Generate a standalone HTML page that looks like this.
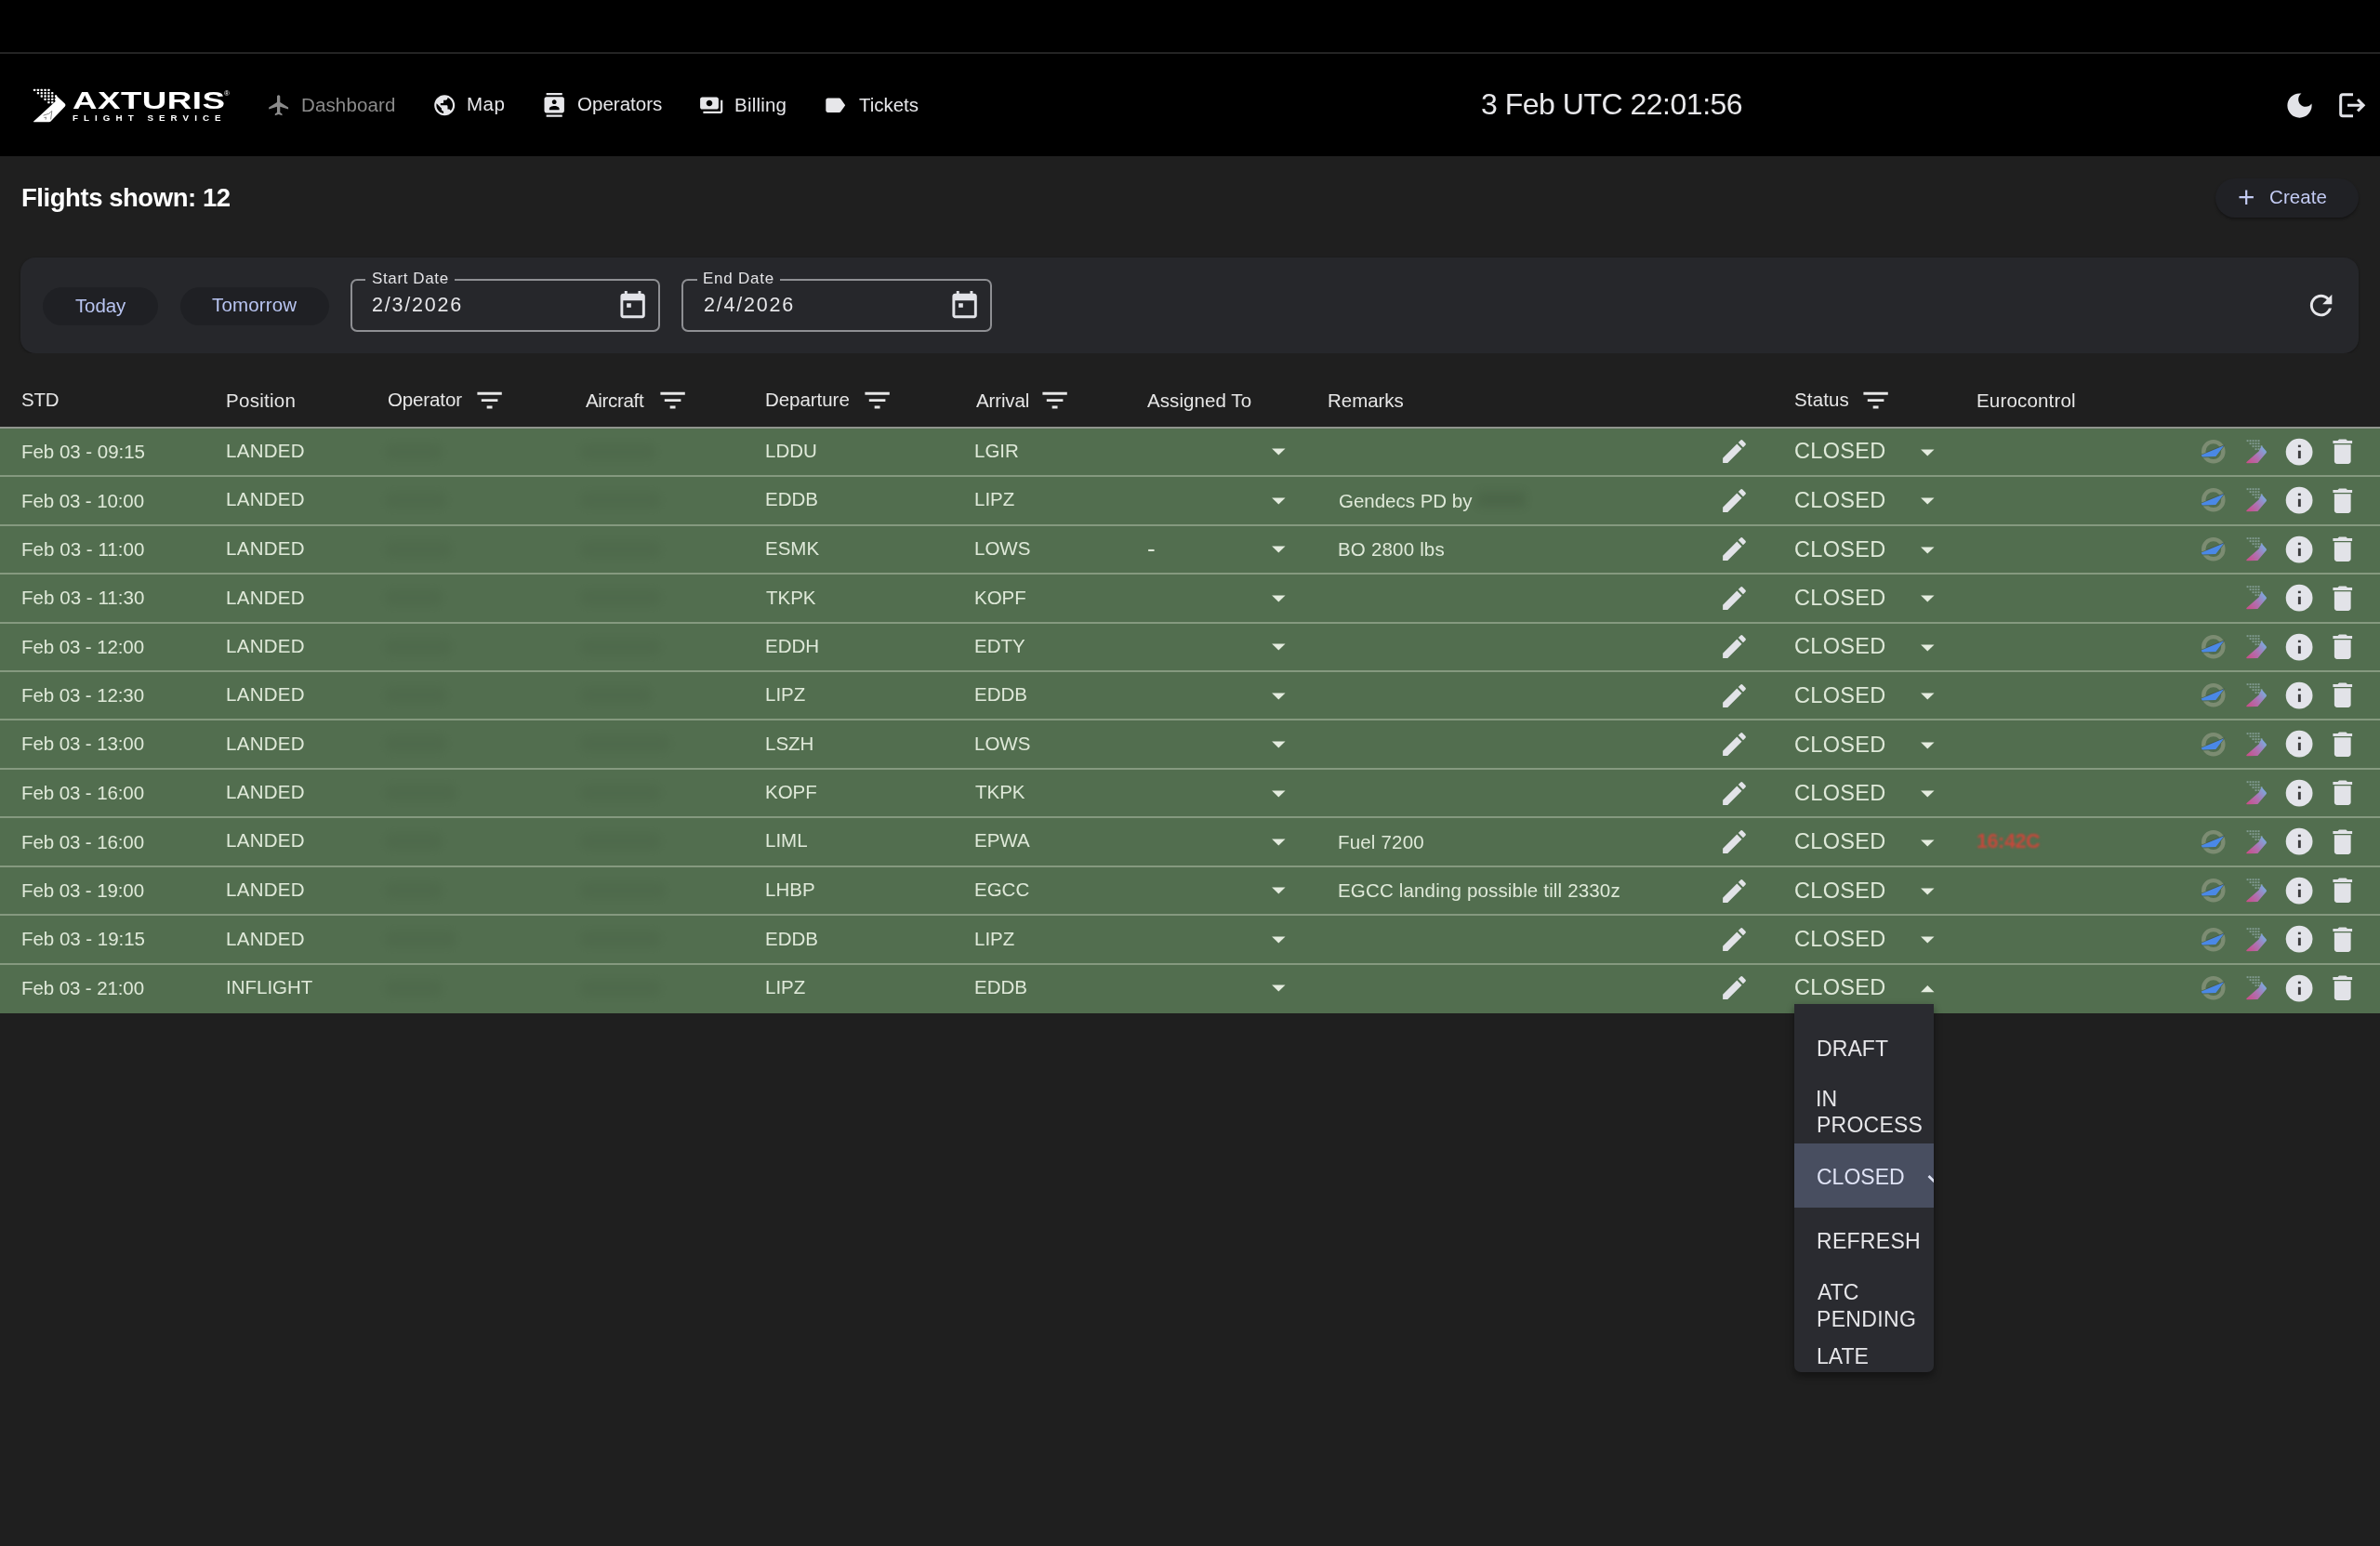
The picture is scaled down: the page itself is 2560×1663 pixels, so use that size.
<!DOCTYPE html>
<html><head><meta charset="utf-8"><style>
html,body{margin:0;padding:0;width:2560px;height:1663px;overflow:hidden;background:#1f1f1f}
.r{position:absolute;display:block}
.t{position:absolute;white-space:pre;line-height:1;font-family:"Liberation Sans",sans-serif;will-change:transform}
</style></head><body>
<div class="r" style="left:0.00px;top:0.00px;width:2560.00px;height:56.00px;background:#000;"></div>
<div class="r" style="left:0.00px;top:56.00px;width:2560.00px;height:2.00px;background:#242424;"></div>
<div class="r" style="left:0.00px;top:58.00px;width:2560.00px;height:110.00px;background:#000;"></div>
<div class="r" style="left:0.00px;top:168.00px;width:2560.00px;height:1495.00px;background:#1f1f1f;"></div>
<svg class="r" style="left:34px;top:94px" width="40" height="40" viewBox="34 94 40 40"><rect x="35.95" y="95.75" width="2.3" height="2.3" rx="0.6" fill="#fff"/><rect x="39.78" y="95.75" width="2.3" height="2.3" rx="0.6" fill="#fff"/><rect x="43.61" y="95.75" width="2.3" height="2.3" rx="0.6" fill="#fff"/><rect x="47.44" y="95.75" width="2.3" height="2.3" rx="0.6" fill="#fff"/><rect x="51.27" y="95.75" width="2.3" height="2.3" rx="0.6" fill="#fff"/><rect x="39.78" y="99.05" width="2.3" height="2.3" rx="0.6" fill="#fff"/><rect x="43.61" y="99.05" width="2.3" height="2.3" rx="0.6" fill="#fff"/><rect x="47.44" y="99.05" width="2.3" height="2.3" rx="0.6" fill="#fff"/><rect x="51.27" y="99.05" width="2.3" height="2.3" rx="0.6" fill="#fff"/><rect x="55.10" y="99.05" width="2.3" height="2.3" rx="0.6" fill="#fff"/><rect x="43.61" y="102.35" width="2.3" height="2.3" rx="0.6" fill="#fff"/><rect x="47.44" y="102.35" width="2.3" height="2.3" rx="0.6" fill="#fff"/><rect x="51.27" y="102.35" width="2.3" height="2.3" rx="0.6" fill="#fff"/><rect x="55.10" y="102.35" width="2.3" height="2.3" rx="0.6" fill="#fff"/><rect x="58.93" y="102.35" width="2.3" height="2.3" rx="0.6" fill="#fff"/><rect x="47.44" y="105.65" width="2.3" height="2.3" rx="0.6" fill="#fff"/><rect x="51.27" y="105.65" width="2.3" height="2.3" rx="0.6" fill="#fff"/><rect x="55.10" y="105.65" width="2.3" height="2.3" rx="0.6" fill="#fff"/><rect x="58.93" y="105.65" width="2.3" height="2.3" rx="0.6" fill="#fff"/><rect x="51.27" y="108.95" width="2.3" height="2.3" rx="0.6" fill="#fff"/><rect x="55.10" y="108.95" width="2.3" height="2.3" rx="0.6" fill="#fff"/><path d="M35.7 131 L59.4 109.2 L60.2 102.4 L69.8 111.6 Q71.2 113 69.9 114.6 L54.6 130.6 Q54 131.3 53 131.3 L36.4 131.3 Z" fill="#fff"/><path d="M46.5 124.2 L52.7 122.2 L55.8 119.4 L54.6 128.5 M47.4 126.6 L49.7 126.1 L49.1 128.7" stroke="#7a7a7a" stroke-width="0.9" fill="none"/></svg>
<div class="t" id="axt" style="left:78px;top:96px;font-size:25px;font-weight:700;color:#fff;transform-origin:0 0;transform:scaleX(1.47);letter-spacing:0.3px">AXTURIS</div>
<div class="t" style="left:241px;top:97px;font-size:8px;color:#fff">&#174;</div>
<div class="t" id="fls" style="left:77.5px;top:121.8px;font-size:9.8px;font-weight:700;color:#fff;letter-spacing:6.05px">FLIGHT SERVICE</div>
<svg class="r" style="left:286.80px;top:100.10px;" width="26.40" height="26.40" viewBox="0 0 24 24"><path d="M21 16v-2l-8-5V3.5c0-.83-.67-1.5-1.5-1.5S10 2.67 10 3.5V9l-8 5v2l8-2.5V19l-2 1.5V22l3.5-1 3.5 1v-1.5L13 19v-5.5z" fill="#8a8a8a"/></svg>
<div id="dash" class="t" style="left:323.70px;top:102.50px;font-size:20.50px;color:#8b8b8b;letter-spacing:0.136px;font-weight:400;">Dashboard</div>
<svg class="r" style="left:465.30px;top:99.60px;" width="26.40" height="26.40" viewBox="0 0 24 24"><path d="M12 2C6.48 2 2 6.48 2 12s4.48 10 10 10 10-4.48 10-10S17.52 2 12 2m-1 17.93c-3.95-.49-7-3.85-7-7.93 0-.62.08-1.21.21-1.79L9 15v1c0 1.1.9 2 2 2zm6.9-2.54c-.26-.81-1-1.39-1.9-1.39h-1v-3c0-.55-.45-1-1-1H8v-2h2c.55 0 1-.45 1-1V7h2c1.1 0 2-.9 2-2v-.41c2.93 1.19 5 4.06 5 7.41 0 2.08-.8 3.97-2.1 5.39" fill="#e7e7ea"/></svg>
<div id="map" class="t" style="left:502.16px;top:101.80px;font-size:20.50px;color:#e7e7ea;letter-spacing:0.450px;font-weight:400;">Map</div>
<svg class="r" style="left:582.86px;top:100.00px;" width="26.40" height="25.70" viewBox="0 0 24 24"><path d="M20 0H4v2h16zM4 24h16v-2H4zM20 4H4c-1.1 0-2 .9-2 2v12c0 1.1.9 2 2 2h16c1.1 0 2-.9 2-2V6c0-1.1-.9-2-2-2m-8 2.75c1.24 0 2.25 1.01 2.25 2.25s-1.01 2.25-2.25 2.25S9.75 10.24 9.75 9 10.76 6.75 12 6.75M17 17H7v-1.5c0-1.67 3.33-2.5 5-2.5s5 .83 5 2.5z" fill="#e7e7ea"/></svg>
<div id="ops" class="t" style="left:621.00px;top:101.80px;font-size:20.50px;color:#e7e7ea;letter-spacing:0.021px;font-weight:400;">Operators</div>
<svg class="r" style="left:752.20px;top:100.00px;" width="26.40" height="26.40" viewBox="0 0 24 24"><path d="M19 14V6c0-1.1-.9-2-2-2H3c-1.1 0-2 .9-2 2v8c0 1.1.9 2 2 2h14c1.1 0 2-.9 2-2m-9-1c-1.66 0-3-1.34-3-3s1.34-3 3-3 3 1.34 3 3-1.34 3-3 3m13-6v11c0 1.1-.9 2-2 2H4v-2h17V7z" fill="#e7e7ea"/></svg>
<div id="bill" class="t" style="left:790.08px;top:102.50px;font-size:20.50px;color:#e7e7ea;letter-spacing:0.210px;font-weight:400;">Billing</div>
<svg class="r" style="left:885.46px;top:100.10px;" width="26.40" height="26.40" viewBox="0 0 24 24"><path d="M17.63 5.84C17.27 5.33 16.67 5 16 5L5 5.01C3.9 5.01 3 5.9 3 7v10c0 1.1.9 1.99 2 1.99L16 19c.67 0 1.27-.33 1.63-.84L22 12z" fill="#e7e7ea"/></svg>
<div id="tix" class="t" style="left:924.00px;top:102.50px;font-size:20.50px;color:#e7e7ea;letter-spacing:-0.030px;font-weight:400;">Tickets</div>
<div id="clock" class="t" style="left:1592.54px;top:95.70px;font-size:32.00px;color:#e8e8eb;letter-spacing:-0.487px;font-weight:400;">3 Feb UTC 22:01:56</div>
<svg class="r" style="left:2455.82px;top:96.42px;" width="35.00" height="35.00" viewBox="0 0 24 24"><path d="M12 3c-4.97 0-9 4.03-9 9s4.03 9 9 9 9-4.03 9-9c0-.46-.04-.92-.1-1.36-.98 1.37-2.58 2.26-4.4 2.26-2.98 0-5.4-2.42-5.4-5.4 0-1.81.89-3.42 2.26-4.4-.44-.06-.9-.1-1.36-.1" fill="#e2e3e8"/></svg>
<svg class="r" style="left:2514px;top:98px" width="32" height="31" viewBox="0 0 32 31"><path d="M17 3.7 H6 Q3.7 3.7 3.7 6 V24.5 Q3.7 26.8 6 26.8 H17" stroke="#e2e3e8" stroke-width="3" fill="none" stroke-linecap="butt"/><path d="M11 15.2 H28 M22 9 L28.2 15.2 L22 21.4" stroke="#e2e3e8" stroke-width="3" fill="none"/></svg>
<div id="flights" class="t" style="left:22.60px;top:198.82px;font-size:27.50px;color:#ffffff;letter-spacing:-0.450px;font-weight:700;">Flights shown: 12</div>
<div class="r" style="left:2383.00px;top:192.00px;width:154.00px;height:42.00px;background:#202125;border-radius:21px;box-shadow:0 2px 3px rgba(0,0,0,0.35)"></div>
<svg class="r" style="left:2403.40px;top:199.20px;" width="26.40" height="26.40" viewBox="0 0 24 24"><path d="M19 13h-6v6h-2v-6H5v-2h6V5h2v6h6z" fill="#c3cbf3"/></svg>
<div id="create" class="t" style="left:2440.62px;top:202.06px;font-size:20.50px;color:#c3cbf3;letter-spacing:0.072px;font-weight:400;">Create</div>
<div class="r" style="left:22.20px;top:277.00px;width:2515.30px;height:103.00px;background:#26272b;border-radius:16px;box-shadow:0 1px 3px rgba(0,0,0,0.3)"></div>
<div class="r" style="left:46.00px;top:308.70px;width:124.00px;height:41.20px;background:#1f2024;border-radius:21px"></div>
<div id="today" class="t" style="left:80.52px;top:319.01px;font-size:20.50px;color:#b9c5f2;letter-spacing:-0.135px;font-weight:400;">Today</div>
<div class="r" style="left:194.00px;top:308.70px;width:160.00px;height:41.20px;background:#1f2024;border-radius:21px"></div>
<div id="tomorrow" class="t" style="left:227.52px;top:317.62px;font-size:20.50px;color:#b9c5f2;letter-spacing:0.154px;font-weight:400;">Tomorrow</div>
<div class="r" style="left:376.90px;top:300.30px;width:333.30px;height:56.70px;background:transparent;border:2px solid #8e8f93;border-radius:7px;box-sizing:border-box"></div>
<div class="r" style="left:393.00px;top:295.00px;width:95.80px;height:10.00px;background:#26272b;"></div>
<div id="startlbl" class="t" style="left:400.00px;top:291.47px;font-size:17.00px;color:#e4e4e7;letter-spacing:0.620px;font-weight:400;">Start Date</div>
<div id="startval" class="t" style="left:400.00px;top:317.53px;font-size:21.50px;color:#e6e6e9;letter-spacing:1.801px;font-weight:400;">2/3/2026</div>
<svg class="r" style="left:663.29px;top:309.63px;" width="35.20" height="35.20" viewBox="0 0 24 24"><path d="M19 4h-1V2h-2v2H8V2H6v2H5c-1.11 0-1.99.9-1.99 2L3 20c0 1.1.89 2 2 2h14c1.1 0 2-.9 2-2V6c0-1.1-.9-2-2-2m0 16H5V9h14zM7.6 11h3.2v3.2H7.6z" fill="#e2e3e8"/></svg>
<div class="r" style="left:733.30px;top:300.30px;width:334.00px;height:56.70px;background:transparent;border:2px solid #8e8f93;border-radius:7px;box-sizing:border-box"></div>
<div class="r" style="left:750.00px;top:295.00px;width:89.00px;height:10.00px;background:#26272b;"></div>
<div id="endlbl" class="t" style="left:756.10px;top:291.47px;font-size:17.00px;color:#e4e4e7;letter-spacing:0.772px;font-weight:400;">End Date</div>
<div id="endval" class="t" style="left:757.00px;top:317.53px;font-size:21.50px;color:#e6e6e9;letter-spacing:1.801px;font-weight:400;">2/4/2026</div>
<svg class="r" style="left:1020.39px;top:309.63px;" width="35.20" height="35.20" viewBox="0 0 24 24"><path d="M19 4h-1V2h-2v2H8V2H6v2H5c-1.11 0-1.99.9-1.99 2L3 20c0 1.1.89 2 2 2h14c1.1 0 2-.9 2-2V6c0-1.1-.9-2-2-2m0 16H5V9h14zM7.6 11h3.2v3.2H7.6z" fill="#e2e3e8"/></svg>
<svg class="r" style="left:2478.82px;top:310.72px;" width="35.20" height="35.20" viewBox="0 0 24 24"><path d="M17.65 6.35C16.2 4.9 14.21 4 12 4c-4.42 0-7.99 3.58-7.99 8s3.57 8 7.99 8c3.73 0 6.84-2.55 7.73-6h-2.08c-.82 2.33-3.04 4-5.65 4-3.31 0-6-2.69-6-6s2.69-6 6-6c1.66 0 3.14.69 4.22 1.78L13 11h7V4z" fill="#e6e6ea"/></svg>
<div class="r" style="left:0.00px;top:380.00px;width:2560.00px;height:80.00px;background:#1f1f1f;"></div>
<div id="hstd" class="t" style="left:22.60px;top:419.97px;font-size:20.50px;color:#e6e6e6;letter-spacing:-0.270px;font-weight:400;">STD</div>
<div id="hpos" class="t" style="left:242.60px;top:420.67px;font-size:20.50px;color:#e6e6e6;letter-spacing:0.284px;font-weight:400;">Position</div>
<div id="hop" class="t" style="left:417.00px;top:419.97px;font-size:20.50px;color:#e6e6e6;letter-spacing:-0.129px;font-weight:400;">Operator</div>
<div id="hac" class="t" style="left:630.42px;top:420.67px;font-size:20.50px;color:#e6e6e6;letter-spacing:-0.334px;font-weight:400;">Aircraft</div>
<div id="hdep" class="t" style="left:823.14px;top:419.97px;font-size:20.50px;color:#e6e6e6;letter-spacing:-0.046px;font-weight:400;">Departure</div>
<div id="harr" class="t" style="left:1049.92px;top:420.67px;font-size:20.50px;color:#e6e6e6;letter-spacing:-0.150px;font-weight:400;">Arrival</div>
<div id="hass" class="t" style="left:1234.00px;top:420.67px;font-size:20.50px;color:#e6e6e6;letter-spacing:0.072px;font-weight:400;">Assigned To</div>
<div id="hrem" class="t" style="left:1427.64px;top:420.67px;font-size:20.50px;color:#e6e6e6;letter-spacing:-0.030px;font-weight:400;">Remarks</div>
<div id="hst" class="t" style="left:1929.58px;top:419.97px;font-size:20.50px;color:#e6e6e6;letter-spacing:0.144px;font-weight:400;">Status</div>
<div id="heu" class="t" style="left:2125.62px;top:420.67px;font-size:20.50px;color:#e6e6e6;letter-spacing:0.180px;font-weight:400;">Eurocontrol</div>
<svg class="r" style="left:508.80px;top:412.60px;" width="35.20" height="35.20" viewBox="0 0 24 24"><path d="M10 18h4v-2h-4zM3 6v2h18V6zm3 7h12v-2H6z" fill="#e6e6e6"/></svg>
<svg class="r" style="left:705.80px;top:412.60px;" width="35.20" height="35.20" viewBox="0 0 24 24"><path d="M10 18h4v-2h-4zM3 6v2h18V6zm3 7h12v-2H6z" fill="#e6e6e6"/></svg>
<svg class="r" style="left:925.80px;top:412.60px;" width="35.20" height="35.20" viewBox="0 0 24 24"><path d="M10 18h4v-2h-4zM3 6v2h18V6zm3 7h12v-2H6z" fill="#e6e6e6"/></svg>
<svg class="r" style="left:1117.40px;top:412.60px;" width="35.20" height="35.20" viewBox="0 0 24 24"><path d="M10 18h4v-2h-4zM3 6v2h18V6zm3 7h12v-2H6z" fill="#e6e6e6"/></svg>
<svg class="r" style="left:2000.40px;top:412.60px;" width="35.20" height="35.20" viewBox="0 0 24 24"><path d="M10 18h4v-2h-4zM3 6v2h18V6zm3 7h12v-2H6z" fill="#e6e6e6"/></svg>
<div class="r" style="left:0.00px;top:458.70px;width:2560.00px;height:631.00px;background:#526e4f;"></div>
<div class="r" style="left:0.00px;top:458.70px;width:2560.00px;height:2.00px;background:#8f948d;"></div>
<div id="r0std" class="t" style="left:22.64px;top:475.77px;font-size:20.50px;color:#dfe9d9;letter-spacing:-0.028px;font-weight:400;">Feb 03 - 09:15</div>
<div id="r0pos" class="t" style="left:243.10px;top:475.07px;font-size:20.50px;color:#dfe9d9;letter-spacing:0.288px;font-weight:400;">LANDED</div>
<div id="r0dep" class="t" style="left:823.14px;top:475.07px;font-size:20.50px;color:#dfe9d9;letter-spacing:0.000px;font-weight:400;">LDDU</div>
<div id="r0arr" class="t" style="left:1048.12px;top:475.07px;font-size:20.50px;color:#dfe9d9;letter-spacing:0.000px;font-weight:400;">LGIR</div>
<div class="r" style="left:415px;top:476.70px;width:60px;height:18px;background:#3f573c;opacity:0.16;filter:blur(4px);border-radius:6px"></div>
<div class="r" style="left:625px;top:476.70px;width:80px;height:18px;background:#3f573c;opacity:0.16;filter:blur(4px);border-radius:6px"></div>
<svg class="r" style="left:1358.32px;top:468.40px;" width="34.60" height="34.60" viewBox="0 0 24 24"><path d="M7 10l5 5 5-5z" fill="#e4ecdf"/></svg>
<svg class="r" style="left:1849.47px;top:469.48px;" width="33.00" height="33.00" viewBox="0 0 24 24"><path d="M3 17.25V21h3.75L17.81 9.94l-3.75-3.75zM20.71 7.04c.39-.39.39-1.02 0-1.41l-2.34-2.34a.996.996 0 0 0-1.41 0l-1.83 1.83 3.75 3.75z" fill="#e2e3e8"/></svg>
<div id="r0st" class="t" style="left:1929.62px;top:474.45px;font-size:23.50px;color:#dfe9d9;letter-spacing:0.324px;font-weight:400;">CLOSED</div>
<svg class="r" style="left:2055.92px;top:468.90px;" width="34.60" height="34.60" viewBox="0 0 24 24"><path d="M7 10l5 5 5-5z" fill="#e4ecdf"/></svg>
<svg class="r" style="left:2362px;top:467.00px;filter:blur(0.5px)" width="38" height="38" viewBox="2362 467 38 38"><circle cx="2380.8" cy="485.7" r="10.6" stroke="#7c8c72" stroke-width="4.4" fill="none"/><path d="M2366.5 489.2 L2393.5 478.2 L2384 492 L2367.5 492.4 Z" fill="#50694c"/><path d="M2374 485.8 L2392.8 478.4 L2392 480.4 L2373 487.8 Z" fill="#4a5a47"/><path d="M2367.7 489.6 L2392.3 479.3 L2383.4 491 L2368.8 491.4 Z" fill="#4a88e6"/></svg>
<svg class="r" style="left:2410px;top:467.00px;filter:blur(0.4px)" width="34" height="36" viewBox="2410 467 34 36"><defs><linearGradient id="g0" gradientUnits="userSpaceOnUse" x1="2417" y1="497" x2="2437" y2="481"><stop offset="0" stop-color="#c8508a"/><stop offset="0.45" stop-color="#b070b0"/><stop offset="1" stop-color="#74b0e2"/></linearGradient></defs><g fill="#a9c2c8" opacity="0.55"><rect x="2416.6" y="473.2" width="1.9" height="1.9" /><rect x="2419.6" y="473.2" width="1.9" height="1.9" /><rect x="2422.6" y="473.2" width="1.9" height="1.9" /><rect x="2425.6" y="473.2" width="1.9" height="1.9" /><rect x="2428.6" y="473.2" width="1.9" height="1.9" /><rect x="2419.6" y="476.2" width="1.9" height="1.9" /><rect x="2422.6" y="476.2" width="1.9" height="1.9" /><rect x="2425.6" y="476.2" width="1.9" height="1.9" /><rect x="2428.6" y="476.2" width="1.9" height="1.9" /><rect x="2422.6" y="479.2" width="1.9" height="1.9" /><rect x="2425.6" y="479.2" width="1.9" height="1.9" /><rect x="2428.6" y="479.2" width="1.9" height="1.9" /><rect x="2431.6" y="479.2" width="1.9" height="1.9" /><rect x="2425.6" y="482.2" width="1.9" height="1.9" /><rect x="2428.6" y="482.2" width="1.9" height="1.9" /><rect x="2431.6" y="482.2" width="1.9" height="1.9" /></g><path d="M2416.1 497.3 L2429.8 485.2 L2432.6 479.6 L2437.6 485.2 Q2438.3 486.2 2437.6 487.2 L2428.4 498 L2416.8 498.3 Z" fill="url(#g0)"/></svg>
<svg class="r" style="left:2455px;top:467.70px" width="36" height="36" viewBox="2455 467.7 36 36"><circle cx="2473.1" cy="485.8" r="14.4" fill="#e3e4ea"/><rect x="2471.9" y="484.5" width="2.9" height="8.3" fill="#3b3b3d"/><rect x="2471.9" y="478.4" width="2.9" height="2.4" fill="#3b3b3d"/></svg>
<svg class="r" style="left:2501.75px;top:468.22px;" width="35.50" height="35.50" viewBox="0 0 24 24"><path d="M6 19c0 1.1.9 2 2 2h8c1.1 0 2-.9 2-2V7H6zM19 4h-3.5l-1-1h-5l-1 1H5v2h14z" fill="#e2e3e8"/></svg>
<div class="r" style="left:0.00px;top:511.15px;width:2560.00px;height:2.00px;background:#85997f;"></div>
<div id="r1std" class="t" style="left:22.64px;top:528.77px;font-size:20.50px;color:#dfe9d9;letter-spacing:-0.097px;font-weight:400;">Feb 03 - 10:00</div>
<div id="r1pos" class="t" style="left:243.10px;top:527.37px;font-size:20.50px;color:#dfe9d9;letter-spacing:0.288px;font-weight:400;">LANDED</div>
<div id="r1dep" class="t" style="left:823.14px;top:527.37px;font-size:20.50px;color:#dfe9d9;letter-spacing:0.000px;font-weight:400;">EDDB</div>
<div id="r1arr" class="t" style="left:1048.12px;top:527.37px;font-size:20.50px;color:#dfe9d9;letter-spacing:0.000px;font-weight:400;">LIPZ</div>
<div id="r1rem" class="t" style="left:1439.60px;top:528.77px;font-size:20.50px;color:#dfe9d9;letter-spacing:-0.007px;font-weight:400;">Gendecs PD by</div>
<div class="r" style="left:415px;top:529.15px;width:65px;height:18px;background:#3f573c;opacity:0.16;filter:blur(4px);border-radius:6px"></div>
<div class="r" style="left:625px;top:529.15px;width:85px;height:18px;background:#3f573c;opacity:0.16;filter:blur(4px);border-radius:6px"></div>
<div class="r" style="left:1590px;top:529.15px;width:50px;height:16px;background:#3f573c;opacity:0.3;filter:blur(4px)"></div>
<svg class="r" style="left:1358.32px;top:520.85px;" width="34.60" height="34.60" viewBox="0 0 24 24"><path d="M7 10l5 5 5-5z" fill="#e4ecdf"/></svg>
<svg class="r" style="left:1849.47px;top:521.92px;" width="33.00" height="33.00" viewBox="0 0 24 24"><path d="M3 17.25V21h3.75L17.81 9.94l-3.75-3.75zM20.71 7.04c.39-.39.39-1.02 0-1.41l-2.34-2.34a.996.996 0 0 0-1.41 0l-1.83 1.83 3.75 3.75z" fill="#e2e3e8"/></svg>
<div id="r1st" class="t" style="left:1929.62px;top:526.74px;font-size:23.50px;color:#dfe9d9;letter-spacing:0.324px;font-weight:400;">CLOSED</div>
<svg class="r" style="left:2055.92px;top:521.35px;" width="34.60" height="34.60" viewBox="0 0 24 24"><path d="M7 10l5 5 5-5z" fill="#e4ecdf"/></svg>
<svg class="r" style="left:2362px;top:519.45px;filter:blur(0.5px)" width="38" height="38" viewBox="2362 467 38 38"><circle cx="2380.8" cy="485.7" r="10.6" stroke="#7c8c72" stroke-width="4.4" fill="none"/><path d="M2366.5 489.2 L2393.5 478.2 L2384 492 L2367.5 492.4 Z" fill="#50694c"/><path d="M2374 485.8 L2392.8 478.4 L2392 480.4 L2373 487.8 Z" fill="#4a5a47"/><path d="M2367.7 489.6 L2392.3 479.3 L2383.4 491 L2368.8 491.4 Z" fill="#4a88e6"/></svg>
<svg class="r" style="left:2410px;top:519.45px;filter:blur(0.4px)" width="34" height="36" viewBox="2410 467 34 36"><defs><linearGradient id="g1" gradientUnits="userSpaceOnUse" x1="2417" y1="497" x2="2437" y2="481"><stop offset="0" stop-color="#c8508a"/><stop offset="0.45" stop-color="#b070b0"/><stop offset="1" stop-color="#74b0e2"/></linearGradient></defs><g fill="#a9c2c8" opacity="0.55"><rect x="2416.6" y="473.2" width="1.9" height="1.9" /><rect x="2419.6" y="473.2" width="1.9" height="1.9" /><rect x="2422.6" y="473.2" width="1.9" height="1.9" /><rect x="2425.6" y="473.2" width="1.9" height="1.9" /><rect x="2428.6" y="473.2" width="1.9" height="1.9" /><rect x="2419.6" y="476.2" width="1.9" height="1.9" /><rect x="2422.6" y="476.2" width="1.9" height="1.9" /><rect x="2425.6" y="476.2" width="1.9" height="1.9" /><rect x="2428.6" y="476.2" width="1.9" height="1.9" /><rect x="2422.6" y="479.2" width="1.9" height="1.9" /><rect x="2425.6" y="479.2" width="1.9" height="1.9" /><rect x="2428.6" y="479.2" width="1.9" height="1.9" /><rect x="2431.6" y="479.2" width="1.9" height="1.9" /><rect x="2425.6" y="482.2" width="1.9" height="1.9" /><rect x="2428.6" y="482.2" width="1.9" height="1.9" /><rect x="2431.6" y="482.2" width="1.9" height="1.9" /></g><path d="M2416.1 497.3 L2429.8 485.2 L2432.6 479.6 L2437.6 485.2 Q2438.3 486.2 2437.6 487.2 L2428.4 498 L2416.8 498.3 Z" fill="url(#g1)"/></svg>
<svg class="r" style="left:2455px;top:520.15px" width="36" height="36" viewBox="2455 467.7 36 36"><circle cx="2473.1" cy="485.8" r="14.4" fill="#e3e4ea"/><rect x="2471.9" y="484.5" width="2.9" height="8.3" fill="#3b3b3d"/><rect x="2471.9" y="478.4" width="2.9" height="2.4" fill="#3b3b3d"/></svg>
<svg class="r" style="left:2501.75px;top:520.67px;" width="35.50" height="35.50" viewBox="0 0 24 24"><path d="M6 19c0 1.1.9 2 2 2h8c1.1 0 2-.9 2-2V7H6zM19 4h-3.5l-1-1h-5l-1 1H5v2h14z" fill="#e2e3e8"/></svg>
<div class="r" style="left:0.00px;top:563.60px;width:2560.00px;height:2.00px;background:#85997f;"></div>
<div id="r2std" class="t" style="left:22.64px;top:581.10px;font-size:20.50px;color:#dfe9d9;letter-spacing:0.041px;font-weight:400;">Feb 03 - 11:00</div>
<div id="r2pos" class="t" style="left:243.10px;top:579.70px;font-size:20.50px;color:#dfe9d9;letter-spacing:0.288px;font-weight:400;">LANDED</div>
<div id="r2dep" class="t" style="left:823.14px;top:579.70px;font-size:20.50px;color:#dfe9d9;letter-spacing:0.000px;font-weight:400;">ESMK</div>
<div id="r2arr" class="t" style="left:1048.12px;top:579.70px;font-size:20.50px;color:#dfe9d9;letter-spacing:0.000px;font-weight:400;">LOWS</div>
<div id="r2ass" class="t" style="left:1233.50px;top:577.10px;font-size:26.00px;color:#dfe9d9;letter-spacing:0.000px;font-weight:400;">-</div>
<div id="r2rem" class="t" style="left:1438.70px;top:581.10px;font-size:20.50px;color:#dfe9d9;letter-spacing:0.189px;font-weight:400;">BO 2800 lbs</div>
<div class="r" style="left:415px;top:581.60px;width:70px;height:18px;background:#3f573c;opacity:0.16;filter:blur(4px);border-radius:6px"></div>
<div class="r" style="left:625px;top:581.60px;width:85px;height:18px;background:#3f573c;opacity:0.16;filter:blur(4px);border-radius:6px"></div>
<svg class="r" style="left:1358.32px;top:573.30px;" width="34.60" height="34.60" viewBox="0 0 24 24"><path d="M7 10l5 5 5-5z" fill="#e4ecdf"/></svg>
<svg class="r" style="left:1849.47px;top:574.38px;" width="33.00" height="33.00" viewBox="0 0 24 24"><path d="M3 17.25V21h3.75L17.81 9.94l-3.75-3.75zM20.71 7.04c.39-.39.39-1.02 0-1.41l-2.34-2.34a.996.996 0 0 0-1.41 0l-1.83 1.83 3.75 3.75z" fill="#e2e3e8"/></svg>
<div id="r2st" class="t" style="left:1929.62px;top:579.77px;font-size:23.50px;color:#dfe9d9;letter-spacing:0.324px;font-weight:400;">CLOSED</div>
<svg class="r" style="left:2055.92px;top:573.80px;" width="34.60" height="34.60" viewBox="0 0 24 24"><path d="M7 10l5 5 5-5z" fill="#e4ecdf"/></svg>
<svg class="r" style="left:2362px;top:571.90px;filter:blur(0.5px)" width="38" height="38" viewBox="2362 467 38 38"><circle cx="2380.8" cy="485.7" r="10.6" stroke="#7c8c72" stroke-width="4.4" fill="none"/><path d="M2366.5 489.2 L2393.5 478.2 L2384 492 L2367.5 492.4 Z" fill="#50694c"/><path d="M2374 485.8 L2392.8 478.4 L2392 480.4 L2373 487.8 Z" fill="#4a5a47"/><path d="M2367.7 489.6 L2392.3 479.3 L2383.4 491 L2368.8 491.4 Z" fill="#4a88e6"/></svg>
<svg class="r" style="left:2410px;top:571.90px;filter:blur(0.4px)" width="34" height="36" viewBox="2410 467 34 36"><defs><linearGradient id="g2" gradientUnits="userSpaceOnUse" x1="2417" y1="497" x2="2437" y2="481"><stop offset="0" stop-color="#c8508a"/><stop offset="0.45" stop-color="#b070b0"/><stop offset="1" stop-color="#74b0e2"/></linearGradient></defs><g fill="#a9c2c8" opacity="0.55"><rect x="2416.6" y="473.2" width="1.9" height="1.9" /><rect x="2419.6" y="473.2" width="1.9" height="1.9" /><rect x="2422.6" y="473.2" width="1.9" height="1.9" /><rect x="2425.6" y="473.2" width="1.9" height="1.9" /><rect x="2428.6" y="473.2" width="1.9" height="1.9" /><rect x="2419.6" y="476.2" width="1.9" height="1.9" /><rect x="2422.6" y="476.2" width="1.9" height="1.9" /><rect x="2425.6" y="476.2" width="1.9" height="1.9" /><rect x="2428.6" y="476.2" width="1.9" height="1.9" /><rect x="2422.6" y="479.2" width="1.9" height="1.9" /><rect x="2425.6" y="479.2" width="1.9" height="1.9" /><rect x="2428.6" y="479.2" width="1.9" height="1.9" /><rect x="2431.6" y="479.2" width="1.9" height="1.9" /><rect x="2425.6" y="482.2" width="1.9" height="1.9" /><rect x="2428.6" y="482.2" width="1.9" height="1.9" /><rect x="2431.6" y="482.2" width="1.9" height="1.9" /></g><path d="M2416.1 497.3 L2429.8 485.2 L2432.6 479.6 L2437.6 485.2 Q2438.3 486.2 2437.6 487.2 L2428.4 498 L2416.8 498.3 Z" fill="url(#g2)"/></svg>
<svg class="r" style="left:2455px;top:572.60px" width="36" height="36" viewBox="2455 467.7 36 36"><circle cx="2473.1" cy="485.8" r="14.4" fill="#e3e4ea"/><rect x="2471.9" y="484.5" width="2.9" height="8.3" fill="#3b3b3d"/><rect x="2471.9" y="478.4" width="2.9" height="2.4" fill="#3b3b3d"/></svg>
<svg class="r" style="left:2501.75px;top:573.12px;" width="35.50" height="35.50" viewBox="0 0 24 24"><path d="M6 19c0 1.1.9 2 2 2h8c1.1 0 2-.9 2-2V7H6zM19 4h-3.5l-1-1h-5l-1 1H5v2h14z" fill="#e2e3e8"/></svg>
<div class="r" style="left:0.00px;top:616.05px;width:2560.00px;height:2.00px;background:#85997f;"></div>
<div id="r3std" class="t" style="left:22.64px;top:633.38px;font-size:20.50px;color:#dfe9d9;letter-spacing:0.041px;font-weight:400;">Feb 03 - 11:30</div>
<div id="r3pos" class="t" style="left:243.10px;top:632.69px;font-size:20.50px;color:#dfe9d9;letter-spacing:0.288px;font-weight:400;">LANDED</div>
<div id="r3dep" class="t" style="left:824.04px;top:632.69px;font-size:20.50px;color:#dfe9d9;letter-spacing:0.000px;font-weight:400;">TKPK</div>
<div id="r3arr" class="t" style="left:1048.12px;top:632.69px;font-size:20.50px;color:#dfe9d9;letter-spacing:0.000px;font-weight:400;">KOPF</div>
<div class="r" style="left:415px;top:634.05px;width:60px;height:18px;background:#3f573c;opacity:0.16;filter:blur(4px);border-radius:6px"></div>
<div class="r" style="left:625px;top:634.05px;width:85px;height:18px;background:#3f573c;opacity:0.16;filter:blur(4px);border-radius:6px"></div>
<svg class="r" style="left:1358.32px;top:625.75px;" width="34.60" height="34.60" viewBox="0 0 24 24"><path d="M7 10l5 5 5-5z" fill="#e4ecdf"/></svg>
<svg class="r" style="left:1849.47px;top:626.82px;" width="33.00" height="33.00" viewBox="0 0 24 24"><path d="M3 17.25V21h3.75L17.81 9.94l-3.75-3.75zM20.71 7.04c.39-.39.39-1.02 0-1.41l-2.34-2.34a.996.996 0 0 0-1.41 0l-1.83 1.83 3.75 3.75z" fill="#e2e3e8"/></svg>
<div id="r3st" class="t" style="left:1929.62px;top:632.06px;font-size:23.50px;color:#dfe9d9;letter-spacing:0.324px;font-weight:400;">CLOSED</div>
<svg class="r" style="left:2055.92px;top:626.25px;" width="34.60" height="34.60" viewBox="0 0 24 24"><path d="M7 10l5 5 5-5z" fill="#e4ecdf"/></svg>
<svg class="r" style="left:2410px;top:624.35px;filter:blur(0.4px)" width="34" height="36" viewBox="2410 467 34 36"><defs><linearGradient id="g3" gradientUnits="userSpaceOnUse" x1="2417" y1="497" x2="2437" y2="481"><stop offset="0" stop-color="#c8508a"/><stop offset="0.45" stop-color="#b070b0"/><stop offset="1" stop-color="#74b0e2"/></linearGradient></defs><g fill="#a9c2c8" opacity="0.55"><rect x="2416.6" y="473.2" width="1.9" height="1.9" /><rect x="2419.6" y="473.2" width="1.9" height="1.9" /><rect x="2422.6" y="473.2" width="1.9" height="1.9" /><rect x="2425.6" y="473.2" width="1.9" height="1.9" /><rect x="2428.6" y="473.2" width="1.9" height="1.9" /><rect x="2419.6" y="476.2" width="1.9" height="1.9" /><rect x="2422.6" y="476.2" width="1.9" height="1.9" /><rect x="2425.6" y="476.2" width="1.9" height="1.9" /><rect x="2428.6" y="476.2" width="1.9" height="1.9" /><rect x="2422.6" y="479.2" width="1.9" height="1.9" /><rect x="2425.6" y="479.2" width="1.9" height="1.9" /><rect x="2428.6" y="479.2" width="1.9" height="1.9" /><rect x="2431.6" y="479.2" width="1.9" height="1.9" /><rect x="2425.6" y="482.2" width="1.9" height="1.9" /><rect x="2428.6" y="482.2" width="1.9" height="1.9" /><rect x="2431.6" y="482.2" width="1.9" height="1.9" /></g><path d="M2416.1 497.3 L2429.8 485.2 L2432.6 479.6 L2437.6 485.2 Q2438.3 486.2 2437.6 487.2 L2428.4 498 L2416.8 498.3 Z" fill="url(#g3)"/></svg>
<svg class="r" style="left:2455px;top:625.05px" width="36" height="36" viewBox="2455 467.7 36 36"><circle cx="2473.1" cy="485.8" r="14.4" fill="#e3e4ea"/><rect x="2471.9" y="484.5" width="2.9" height="8.3" fill="#3b3b3d"/><rect x="2471.9" y="478.4" width="2.9" height="2.4" fill="#3b3b3d"/></svg>
<svg class="r" style="left:2501.75px;top:625.57px;" width="35.50" height="35.50" viewBox="0 0 24 24"><path d="M6 19c0 1.1.9 2 2 2h8c1.1 0 2-.9 2-2V7H6zM19 4h-3.5l-1-1h-5l-1 1H5v2h14z" fill="#e2e3e8"/></svg>
<div class="r" style="left:0.00px;top:668.50px;width:2560.00px;height:2.00px;background:#85997f;"></div>
<div id="r4std" class="t" style="left:22.64px;top:685.72px;font-size:20.50px;color:#dfe9d9;letter-spacing:-0.097px;font-weight:400;">Feb 03 - 12:00</div>
<div id="r4pos" class="t" style="left:243.10px;top:685.02px;font-size:20.50px;color:#dfe9d9;letter-spacing:0.288px;font-weight:400;">LANDED</div>
<div id="r4dep" class="t" style="left:823.14px;top:685.02px;font-size:20.50px;color:#dfe9d9;letter-spacing:0.000px;font-weight:400;">EDDH</div>
<div id="r4arr" class="t" style="left:1048.12px;top:685.02px;font-size:20.50px;color:#dfe9d9;letter-spacing:0.000px;font-weight:400;">EDTY</div>
<div class="r" style="left:415px;top:686.50px;width:70px;height:18px;background:#3f573c;opacity:0.16;filter:blur(4px);border-radius:6px"></div>
<div class="r" style="left:625px;top:686.50px;width:85px;height:18px;background:#3f573c;opacity:0.16;filter:blur(4px);border-radius:6px"></div>
<svg class="r" style="left:1358.32px;top:678.20px;" width="34.60" height="34.60" viewBox="0 0 24 24"><path d="M7 10l5 5 5-5z" fill="#e4ecdf"/></svg>
<svg class="r" style="left:1849.47px;top:679.27px;" width="33.00" height="33.00" viewBox="0 0 24 24"><path d="M3 17.25V21h3.75L17.81 9.94l-3.75-3.75zM20.71 7.04c.39-.39.39-1.02 0-1.41l-2.34-2.34a.996.996 0 0 0-1.41 0l-1.83 1.83 3.75 3.75z" fill="#e2e3e8"/></svg>
<div id="r4st" class="t" style="left:1929.62px;top:684.39px;font-size:23.50px;color:#dfe9d9;letter-spacing:0.324px;font-weight:400;">CLOSED</div>
<svg class="r" style="left:2055.92px;top:678.70px;" width="34.60" height="34.60" viewBox="0 0 24 24"><path d="M7 10l5 5 5-5z" fill="#e4ecdf"/></svg>
<svg class="r" style="left:2362px;top:676.80px;filter:blur(0.5px)" width="38" height="38" viewBox="2362 467 38 38"><circle cx="2380.8" cy="485.7" r="10.6" stroke="#7c8c72" stroke-width="4.4" fill="none"/><path d="M2366.5 489.2 L2393.5 478.2 L2384 492 L2367.5 492.4 Z" fill="#50694c"/><path d="M2374 485.8 L2392.8 478.4 L2392 480.4 L2373 487.8 Z" fill="#4a5a47"/><path d="M2367.7 489.6 L2392.3 479.3 L2383.4 491 L2368.8 491.4 Z" fill="#4a88e6"/></svg>
<svg class="r" style="left:2410px;top:676.80px;filter:blur(0.4px)" width="34" height="36" viewBox="2410 467 34 36"><defs><linearGradient id="g4" gradientUnits="userSpaceOnUse" x1="2417" y1="497" x2="2437" y2="481"><stop offset="0" stop-color="#c8508a"/><stop offset="0.45" stop-color="#b070b0"/><stop offset="1" stop-color="#74b0e2"/></linearGradient></defs><g fill="#a9c2c8" opacity="0.55"><rect x="2416.6" y="473.2" width="1.9" height="1.9" /><rect x="2419.6" y="473.2" width="1.9" height="1.9" /><rect x="2422.6" y="473.2" width="1.9" height="1.9" /><rect x="2425.6" y="473.2" width="1.9" height="1.9" /><rect x="2428.6" y="473.2" width="1.9" height="1.9" /><rect x="2419.6" y="476.2" width="1.9" height="1.9" /><rect x="2422.6" y="476.2" width="1.9" height="1.9" /><rect x="2425.6" y="476.2" width="1.9" height="1.9" /><rect x="2428.6" y="476.2" width="1.9" height="1.9" /><rect x="2422.6" y="479.2" width="1.9" height="1.9" /><rect x="2425.6" y="479.2" width="1.9" height="1.9" /><rect x="2428.6" y="479.2" width="1.9" height="1.9" /><rect x="2431.6" y="479.2" width="1.9" height="1.9" /><rect x="2425.6" y="482.2" width="1.9" height="1.9" /><rect x="2428.6" y="482.2" width="1.9" height="1.9" /><rect x="2431.6" y="482.2" width="1.9" height="1.9" /></g><path d="M2416.1 497.3 L2429.8 485.2 L2432.6 479.6 L2437.6 485.2 Q2438.3 486.2 2437.6 487.2 L2428.4 498 L2416.8 498.3 Z" fill="url(#g4)"/></svg>
<svg class="r" style="left:2455px;top:677.50px" width="36" height="36" viewBox="2455 467.7 36 36"><circle cx="2473.1" cy="485.8" r="14.4" fill="#e3e4ea"/><rect x="2471.9" y="484.5" width="2.9" height="8.3" fill="#3b3b3d"/><rect x="2471.9" y="478.4" width="2.9" height="2.4" fill="#3b3b3d"/></svg>
<svg class="r" style="left:2501.75px;top:678.02px;" width="35.50" height="35.50" viewBox="0 0 24 24"><path d="M6 19c0 1.1.9 2 2 2h8c1.1 0 2-.9 2-2V7H6zM19 4h-3.5l-1-1h-5l-1 1H5v2h14z" fill="#e2e3e8"/></svg>
<div class="r" style="left:0.00px;top:720.95px;width:2560.00px;height:2.00px;background:#85997f;"></div>
<div id="r5std" class="t" style="left:22.64px;top:738.04px;font-size:20.50px;color:#dfe9d9;letter-spacing:-0.097px;font-weight:400;">Feb 03 - 12:30</div>
<div id="r5pos" class="t" style="left:243.10px;top:737.33px;font-size:20.50px;color:#dfe9d9;letter-spacing:0.288px;font-weight:400;">LANDED</div>
<div id="r5dep" class="t" style="left:823.14px;top:737.33px;font-size:20.50px;color:#dfe9d9;letter-spacing:0.000px;font-weight:400;">LIPZ</div>
<div id="r5arr" class="t" style="left:1048.12px;top:737.33px;font-size:20.50px;color:#dfe9d9;letter-spacing:0.000px;font-weight:400;">EDDB</div>
<div class="r" style="left:415px;top:738.95px;width:65px;height:18px;background:#3f573c;opacity:0.16;filter:blur(4px);border-radius:6px"></div>
<div class="r" style="left:625px;top:738.95px;width:75px;height:18px;background:#3f573c;opacity:0.16;filter:blur(4px);border-radius:6px"></div>
<svg class="r" style="left:1358.32px;top:730.65px;" width="34.60" height="34.60" viewBox="0 0 24 24"><path d="M7 10l5 5 5-5z" fill="#e4ecdf"/></svg>
<svg class="r" style="left:1849.47px;top:731.73px;" width="33.00" height="33.00" viewBox="0 0 24 24"><path d="M3 17.25V21h3.75L17.81 9.94l-3.75-3.75zM20.71 7.04c.39-.39.39-1.02 0-1.41l-2.34-2.34a.996.996 0 0 0-1.41 0l-1.83 1.83 3.75 3.75z" fill="#e2e3e8"/></svg>
<div id="r5st" class="t" style="left:1929.62px;top:736.73px;font-size:23.50px;color:#dfe9d9;letter-spacing:0.324px;font-weight:400;">CLOSED</div>
<svg class="r" style="left:2055.92px;top:731.15px;" width="34.60" height="34.60" viewBox="0 0 24 24"><path d="M7 10l5 5 5-5z" fill="#e4ecdf"/></svg>
<svg class="r" style="left:2362px;top:729.25px;filter:blur(0.5px)" width="38" height="38" viewBox="2362 467 38 38"><circle cx="2380.8" cy="485.7" r="10.6" stroke="#7c8c72" stroke-width="4.4" fill="none"/><path d="M2366.5 489.2 L2393.5 478.2 L2384 492 L2367.5 492.4 Z" fill="#50694c"/><path d="M2374 485.8 L2392.8 478.4 L2392 480.4 L2373 487.8 Z" fill="#4a5a47"/><path d="M2367.7 489.6 L2392.3 479.3 L2383.4 491 L2368.8 491.4 Z" fill="#4a88e6"/></svg>
<svg class="r" style="left:2410px;top:729.25px;filter:blur(0.4px)" width="34" height="36" viewBox="2410 467 34 36"><defs><linearGradient id="g5" gradientUnits="userSpaceOnUse" x1="2417" y1="497" x2="2437" y2="481"><stop offset="0" stop-color="#c8508a"/><stop offset="0.45" stop-color="#b070b0"/><stop offset="1" stop-color="#74b0e2"/></linearGradient></defs><g fill="#a9c2c8" opacity="0.55"><rect x="2416.6" y="473.2" width="1.9" height="1.9" /><rect x="2419.6" y="473.2" width="1.9" height="1.9" /><rect x="2422.6" y="473.2" width="1.9" height="1.9" /><rect x="2425.6" y="473.2" width="1.9" height="1.9" /><rect x="2428.6" y="473.2" width="1.9" height="1.9" /><rect x="2419.6" y="476.2" width="1.9" height="1.9" /><rect x="2422.6" y="476.2" width="1.9" height="1.9" /><rect x="2425.6" y="476.2" width="1.9" height="1.9" /><rect x="2428.6" y="476.2" width="1.9" height="1.9" /><rect x="2422.6" y="479.2" width="1.9" height="1.9" /><rect x="2425.6" y="479.2" width="1.9" height="1.9" /><rect x="2428.6" y="479.2" width="1.9" height="1.9" /><rect x="2431.6" y="479.2" width="1.9" height="1.9" /><rect x="2425.6" y="482.2" width="1.9" height="1.9" /><rect x="2428.6" y="482.2" width="1.9" height="1.9" /><rect x="2431.6" y="482.2" width="1.9" height="1.9" /></g><path d="M2416.1 497.3 L2429.8 485.2 L2432.6 479.6 L2437.6 485.2 Q2438.3 486.2 2437.6 487.2 L2428.4 498 L2416.8 498.3 Z" fill="url(#g5)"/></svg>
<svg class="r" style="left:2455px;top:729.95px" width="36" height="36" viewBox="2455 467.7 36 36"><circle cx="2473.1" cy="485.8" r="14.4" fill="#e3e4ea"/><rect x="2471.9" y="484.5" width="2.9" height="8.3" fill="#3b3b3d"/><rect x="2471.9" y="478.4" width="2.9" height="2.4" fill="#3b3b3d"/></svg>
<svg class="r" style="left:2501.75px;top:730.47px;" width="35.50" height="35.50" viewBox="0 0 24 24"><path d="M6 19c0 1.1.9 2 2 2h8c1.1 0 2-.9 2-2V7H6zM19 4h-3.5l-1-1h-5l-1 1H5v2h14z" fill="#e2e3e8"/></svg>
<div class="r" style="left:0.00px;top:773.40px;width:2560.00px;height:2.00px;background:#85997f;"></div>
<div id="r6std" class="t" style="left:22.64px;top:790.34px;font-size:20.50px;color:#dfe9d9;letter-spacing:-0.097px;font-weight:400;">Feb 03 - 13:00</div>
<div id="r6pos" class="t" style="left:243.10px;top:789.64px;font-size:20.50px;color:#dfe9d9;letter-spacing:0.288px;font-weight:400;">LANDED</div>
<div id="r6dep" class="t" style="left:823.14px;top:789.64px;font-size:20.50px;color:#dfe9d9;letter-spacing:0.000px;font-weight:400;">LSZH</div>
<div id="r6arr" class="t" style="left:1048.12px;top:789.64px;font-size:20.50px;color:#dfe9d9;letter-spacing:0.000px;font-weight:400;">LOWS</div>
<div class="r" style="left:415px;top:791.40px;width:65px;height:18px;background:#3f573c;opacity:0.16;filter:blur(4px);border-radius:6px"></div>
<div class="r" style="left:625px;top:791.40px;width:95px;height:18px;background:#3f573c;opacity:0.16;filter:blur(4px);border-radius:6px"></div>
<svg class="r" style="left:1358.32px;top:783.10px;" width="34.60" height="34.60" viewBox="0 0 24 24"><path d="M7 10l5 5 5-5z" fill="#e4ecdf"/></svg>
<svg class="r" style="left:1849.47px;top:784.18px;" width="33.00" height="33.00" viewBox="0 0 24 24"><path d="M3 17.25V21h3.75L17.81 9.94l-3.75-3.75zM20.71 7.04c.39-.39.39-1.02 0-1.41l-2.34-2.34a.996.996 0 0 0-1.41 0l-1.83 1.83 3.75 3.75z" fill="#e2e3e8"/></svg>
<div id="r6st" class="t" style="left:1929.62px;top:789.72px;font-size:23.50px;color:#dfe9d9;letter-spacing:0.324px;font-weight:400;">CLOSED</div>
<svg class="r" style="left:2055.92px;top:783.60px;" width="34.60" height="34.60" viewBox="0 0 24 24"><path d="M7 10l5 5 5-5z" fill="#e4ecdf"/></svg>
<svg class="r" style="left:2362px;top:781.70px;filter:blur(0.5px)" width="38" height="38" viewBox="2362 467 38 38"><circle cx="2380.8" cy="485.7" r="10.6" stroke="#7c8c72" stroke-width="4.4" fill="none"/><path d="M2366.5 489.2 L2393.5 478.2 L2384 492 L2367.5 492.4 Z" fill="#50694c"/><path d="M2374 485.8 L2392.8 478.4 L2392 480.4 L2373 487.8 Z" fill="#4a5a47"/><path d="M2367.7 489.6 L2392.3 479.3 L2383.4 491 L2368.8 491.4 Z" fill="#4a88e6"/></svg>
<svg class="r" style="left:2410px;top:781.70px;filter:blur(0.4px)" width="34" height="36" viewBox="2410 467 34 36"><defs><linearGradient id="g6" gradientUnits="userSpaceOnUse" x1="2417" y1="497" x2="2437" y2="481"><stop offset="0" stop-color="#c8508a"/><stop offset="0.45" stop-color="#b070b0"/><stop offset="1" stop-color="#74b0e2"/></linearGradient></defs><g fill="#a9c2c8" opacity="0.55"><rect x="2416.6" y="473.2" width="1.9" height="1.9" /><rect x="2419.6" y="473.2" width="1.9" height="1.9" /><rect x="2422.6" y="473.2" width="1.9" height="1.9" /><rect x="2425.6" y="473.2" width="1.9" height="1.9" /><rect x="2428.6" y="473.2" width="1.9" height="1.9" /><rect x="2419.6" y="476.2" width="1.9" height="1.9" /><rect x="2422.6" y="476.2" width="1.9" height="1.9" /><rect x="2425.6" y="476.2" width="1.9" height="1.9" /><rect x="2428.6" y="476.2" width="1.9" height="1.9" /><rect x="2422.6" y="479.2" width="1.9" height="1.9" /><rect x="2425.6" y="479.2" width="1.9" height="1.9" /><rect x="2428.6" y="479.2" width="1.9" height="1.9" /><rect x="2431.6" y="479.2" width="1.9" height="1.9" /><rect x="2425.6" y="482.2" width="1.9" height="1.9" /><rect x="2428.6" y="482.2" width="1.9" height="1.9" /><rect x="2431.6" y="482.2" width="1.9" height="1.9" /></g><path d="M2416.1 497.3 L2429.8 485.2 L2432.6 479.6 L2437.6 485.2 Q2438.3 486.2 2437.6 487.2 L2428.4 498 L2416.8 498.3 Z" fill="url(#g6)"/></svg>
<svg class="r" style="left:2455px;top:782.40px" width="36" height="36" viewBox="2455 467.7 36 36"><circle cx="2473.1" cy="485.8" r="14.4" fill="#e3e4ea"/><rect x="2471.9" y="484.5" width="2.9" height="8.3" fill="#3b3b3d"/><rect x="2471.9" y="478.4" width="2.9" height="2.4" fill="#3b3b3d"/></svg>
<svg class="r" style="left:2501.75px;top:782.92px;" width="35.50" height="35.50" viewBox="0 0 24 24"><path d="M6 19c0 1.1.9 2 2 2h8c1.1 0 2-.9 2-2V7H6zM19 4h-3.5l-1-1h-5l-1 1H5v2h14z" fill="#e2e3e8"/></svg>
<div class="r" style="left:0.00px;top:825.85px;width:2560.00px;height:2.00px;background:#85997f;"></div>
<div id="r7std" class="t" style="left:22.64px;top:843.33px;font-size:20.50px;color:#dfe9d9;letter-spacing:-0.097px;font-weight:400;">Feb 03 - 16:00</div>
<div id="r7pos" class="t" style="left:243.10px;top:841.93px;font-size:20.50px;color:#dfe9d9;letter-spacing:0.288px;font-weight:400;">LANDED</div>
<div id="r7dep" class="t" style="left:823.14px;top:841.93px;font-size:20.50px;color:#dfe9d9;letter-spacing:0.000px;font-weight:400;">KOPF</div>
<div id="r7arr" class="t" style="left:1049.02px;top:841.93px;font-size:20.50px;color:#dfe9d9;letter-spacing:0.000px;font-weight:400;">TKPK</div>
<div class="r" style="left:415px;top:843.85px;width:75px;height:18px;background:#3f573c;opacity:0.16;filter:blur(4px);border-radius:6px"></div>
<div class="r" style="left:625px;top:843.85px;width:85px;height:18px;background:#3f573c;opacity:0.16;filter:blur(4px);border-radius:6px"></div>
<svg class="r" style="left:1358.32px;top:835.55px;" width="34.60" height="34.60" viewBox="0 0 24 24"><path d="M7 10l5 5 5-5z" fill="#e4ecdf"/></svg>
<svg class="r" style="left:1849.47px;top:836.62px;" width="33.00" height="33.00" viewBox="0 0 24 24"><path d="M3 17.25V21h3.75L17.81 9.94l-3.75-3.75zM20.71 7.04c.39-.39.39-1.02 0-1.41l-2.34-2.34a.996.996 0 0 0-1.41 0l-1.83 1.83 3.75 3.75z" fill="#e2e3e8"/></svg>
<div id="r7st" class="t" style="left:1929.62px;top:842.04px;font-size:23.50px;color:#dfe9d9;letter-spacing:0.324px;font-weight:400;">CLOSED</div>
<svg class="r" style="left:2055.92px;top:836.05px;" width="34.60" height="34.60" viewBox="0 0 24 24"><path d="M7 10l5 5 5-5z" fill="#e4ecdf"/></svg>
<svg class="r" style="left:2410px;top:834.15px;filter:blur(0.4px)" width="34" height="36" viewBox="2410 467 34 36"><defs><linearGradient id="g7" gradientUnits="userSpaceOnUse" x1="2417" y1="497" x2="2437" y2="481"><stop offset="0" stop-color="#c8508a"/><stop offset="0.45" stop-color="#b070b0"/><stop offset="1" stop-color="#74b0e2"/></linearGradient></defs><g fill="#a9c2c8" opacity="0.55"><rect x="2416.6" y="473.2" width="1.9" height="1.9" /><rect x="2419.6" y="473.2" width="1.9" height="1.9" /><rect x="2422.6" y="473.2" width="1.9" height="1.9" /><rect x="2425.6" y="473.2" width="1.9" height="1.9" /><rect x="2428.6" y="473.2" width="1.9" height="1.9" /><rect x="2419.6" y="476.2" width="1.9" height="1.9" /><rect x="2422.6" y="476.2" width="1.9" height="1.9" /><rect x="2425.6" y="476.2" width="1.9" height="1.9" /><rect x="2428.6" y="476.2" width="1.9" height="1.9" /><rect x="2422.6" y="479.2" width="1.9" height="1.9" /><rect x="2425.6" y="479.2" width="1.9" height="1.9" /><rect x="2428.6" y="479.2" width="1.9" height="1.9" /><rect x="2431.6" y="479.2" width="1.9" height="1.9" /><rect x="2425.6" y="482.2" width="1.9" height="1.9" /><rect x="2428.6" y="482.2" width="1.9" height="1.9" /><rect x="2431.6" y="482.2" width="1.9" height="1.9" /></g><path d="M2416.1 497.3 L2429.8 485.2 L2432.6 479.6 L2437.6 485.2 Q2438.3 486.2 2437.6 487.2 L2428.4 498 L2416.8 498.3 Z" fill="url(#g7)"/></svg>
<svg class="r" style="left:2455px;top:834.85px" width="36" height="36" viewBox="2455 467.7 36 36"><circle cx="2473.1" cy="485.8" r="14.4" fill="#e3e4ea"/><rect x="2471.9" y="484.5" width="2.9" height="8.3" fill="#3b3b3d"/><rect x="2471.9" y="478.4" width="2.9" height="2.4" fill="#3b3b3d"/></svg>
<svg class="r" style="left:2501.75px;top:835.37px;" width="35.50" height="35.50" viewBox="0 0 24 24"><path d="M6 19c0 1.1.9 2 2 2h8c1.1 0 2-.9 2-2V7H6zM19 4h-3.5l-1-1h-5l-1 1H5v2h14z" fill="#e2e3e8"/></svg>
<div class="r" style="left:0.00px;top:878.30px;width:2560.00px;height:2.00px;background:#85997f;"></div>
<div id="r8std" class="t" style="left:22.64px;top:895.65px;font-size:20.50px;color:#dfe9d9;letter-spacing:-0.097px;font-weight:400;">Feb 03 - 16:00</div>
<div id="r8pos" class="t" style="left:243.10px;top:894.25px;font-size:20.50px;color:#dfe9d9;letter-spacing:0.288px;font-weight:400;">LANDED</div>
<div id="r8dep" class="t" style="left:823.14px;top:894.25px;font-size:20.50px;color:#dfe9d9;letter-spacing:0.000px;font-weight:400;">LIML</div>
<div id="r8arr" class="t" style="left:1048.12px;top:894.25px;font-size:20.50px;color:#dfe9d9;letter-spacing:0.000px;font-weight:400;">EPWA</div>
<div id="r8rem" class="t" style="left:1438.70px;top:895.65px;font-size:20.50px;color:#dfe9d9;letter-spacing:0.180px;font-weight:400;">Fuel 7200</div>
<div class="r" style="left:415px;top:896.30px;width:60px;height:18px;background:#3f573c;opacity:0.16;filter:blur(4px);border-radius:6px"></div>
<div class="r" style="left:625px;top:896.30px;width:85px;height:18px;background:#3f573c;opacity:0.16;filter:blur(4px);border-radius:6px"></div>
<svg class="r" style="left:1358.32px;top:888.00px;" width="34.60" height="34.60" viewBox="0 0 24 24"><path d="M7 10l5 5 5-5z" fill="#e4ecdf"/></svg>
<svg class="r" style="left:1849.47px;top:889.07px;" width="33.00" height="33.00" viewBox="0 0 24 24"><path d="M3 17.25V21h3.75L17.81 9.94l-3.75-3.75zM20.71 7.04c.39-.39.39-1.02 0-1.41l-2.34-2.34a.996.996 0 0 0-1.41 0l-1.83 1.83 3.75 3.75z" fill="#e2e3e8"/></svg>
<div id="r8st" class="t" style="left:1929.62px;top:894.33px;font-size:23.50px;color:#dfe9d9;letter-spacing:0.324px;font-weight:400;">CLOSED</div>
<svg class="r" style="left:2055.92px;top:888.50px;" width="34.60" height="34.60" viewBox="0 0 24 24"><path d="M7 10l5 5 5-5z" fill="#e4ecdf"/></svg>
<div id="r8red" class="t" style="left:2125.72px;top:895.07px;font-size:21.50px;color:#c9473a;letter-spacing:-0.396px;font-weight:700;filter:blur(0.8px)">16:42C</div>
<svg class="r" style="left:2362px;top:886.60px;filter:blur(0.5px)" width="38" height="38" viewBox="2362 467 38 38"><circle cx="2380.8" cy="485.7" r="10.6" stroke="#7c8c72" stroke-width="4.4" fill="none"/><path d="M2366.5 489.2 L2393.5 478.2 L2384 492 L2367.5 492.4 Z" fill="#50694c"/><path d="M2374 485.8 L2392.8 478.4 L2392 480.4 L2373 487.8 Z" fill="#4a5a47"/><path d="M2367.7 489.6 L2392.3 479.3 L2383.4 491 L2368.8 491.4 Z" fill="#4a88e6"/></svg>
<svg class="r" style="left:2410px;top:886.60px;filter:blur(0.4px)" width="34" height="36" viewBox="2410 467 34 36"><defs><linearGradient id="g8" gradientUnits="userSpaceOnUse" x1="2417" y1="497" x2="2437" y2="481"><stop offset="0" stop-color="#c8508a"/><stop offset="0.45" stop-color="#b070b0"/><stop offset="1" stop-color="#74b0e2"/></linearGradient></defs><g fill="#a9c2c8" opacity="0.55"><rect x="2416.6" y="473.2" width="1.9" height="1.9" /><rect x="2419.6" y="473.2" width="1.9" height="1.9" /><rect x="2422.6" y="473.2" width="1.9" height="1.9" /><rect x="2425.6" y="473.2" width="1.9" height="1.9" /><rect x="2428.6" y="473.2" width="1.9" height="1.9" /><rect x="2419.6" y="476.2" width="1.9" height="1.9" /><rect x="2422.6" y="476.2" width="1.9" height="1.9" /><rect x="2425.6" y="476.2" width="1.9" height="1.9" /><rect x="2428.6" y="476.2" width="1.9" height="1.9" /><rect x="2422.6" y="479.2" width="1.9" height="1.9" /><rect x="2425.6" y="479.2" width="1.9" height="1.9" /><rect x="2428.6" y="479.2" width="1.9" height="1.9" /><rect x="2431.6" y="479.2" width="1.9" height="1.9" /><rect x="2425.6" y="482.2" width="1.9" height="1.9" /><rect x="2428.6" y="482.2" width="1.9" height="1.9" /><rect x="2431.6" y="482.2" width="1.9" height="1.9" /></g><path d="M2416.1 497.3 L2429.8 485.2 L2432.6 479.6 L2437.6 485.2 Q2438.3 486.2 2437.6 487.2 L2428.4 498 L2416.8 498.3 Z" fill="url(#g8)"/></svg>
<svg class="r" style="left:2455px;top:887.30px" width="36" height="36" viewBox="2455 467.7 36 36"><circle cx="2473.1" cy="485.8" r="14.4" fill="#e3e4ea"/><rect x="2471.9" y="484.5" width="2.9" height="8.3" fill="#3b3b3d"/><rect x="2471.9" y="478.4" width="2.9" height="2.4" fill="#3b3b3d"/></svg>
<svg class="r" style="left:2501.75px;top:887.82px;" width="35.50" height="35.50" viewBox="0 0 24 24"><path d="M6 19c0 1.1.9 2 2 2h8c1.1 0 2-.9 2-2V7H6zM19 4h-3.5l-1-1h-5l-1 1H5v2h14z" fill="#e2e3e8"/></svg>
<div class="r" style="left:0.00px;top:930.75px;width:2560.00px;height:2.00px;background:#85997f;"></div>
<div id="r9std" class="t" style="left:22.64px;top:947.95px;font-size:20.50px;color:#dfe9d9;letter-spacing:-0.097px;font-weight:400;">Feb 03 - 19:00</div>
<div id="r9pos" class="t" style="left:243.10px;top:947.25px;font-size:20.50px;color:#dfe9d9;letter-spacing:0.288px;font-weight:400;">LANDED</div>
<div id="r9dep" class="t" style="left:823.14px;top:947.25px;font-size:20.50px;color:#dfe9d9;letter-spacing:0.000px;font-weight:400;">LHBP</div>
<div id="r9arr" class="t" style="left:1048.12px;top:947.25px;font-size:20.50px;color:#dfe9d9;letter-spacing:0.000px;font-weight:400;">EGCC</div>
<div id="r9rem" class="t" style="left:1438.70px;top:947.95px;font-size:20.50px;color:#dfe9d9;letter-spacing:0.165px;font-weight:400;">EGCC landing possible till 2330z</div>
<div class="r" style="left:415px;top:948.75px;width:60px;height:18px;background:#3f573c;opacity:0.16;filter:blur(4px);border-radius:6px"></div>
<div class="r" style="left:625px;top:948.75px;width:90px;height:18px;background:#3f573c;opacity:0.16;filter:blur(4px);border-radius:6px"></div>
<svg class="r" style="left:1358.32px;top:940.45px;" width="34.60" height="34.60" viewBox="0 0 24 24"><path d="M7 10l5 5 5-5z" fill="#e4ecdf"/></svg>
<svg class="r" style="left:1849.47px;top:941.52px;" width="33.00" height="33.00" viewBox="0 0 24 24"><path d="M3 17.25V21h3.75L17.81 9.94l-3.75-3.75zM20.71 7.04c.39-.39.39-1.02 0-1.41l-2.34-2.34a.996.996 0 0 0-1.41 0l-1.83 1.83 3.75 3.75z" fill="#e2e3e8"/></svg>
<div id="r9st" class="t" style="left:1929.62px;top:946.64px;font-size:23.50px;color:#dfe9d9;letter-spacing:0.324px;font-weight:400;">CLOSED</div>
<svg class="r" style="left:2055.92px;top:940.95px;" width="34.60" height="34.60" viewBox="0 0 24 24"><path d="M7 10l5 5 5-5z" fill="#e4ecdf"/></svg>
<svg class="r" style="left:2362px;top:939.05px;filter:blur(0.5px)" width="38" height="38" viewBox="2362 467 38 38"><circle cx="2380.8" cy="485.7" r="10.6" stroke="#7c8c72" stroke-width="4.4" fill="none"/><path d="M2366.5 489.2 L2393.5 478.2 L2384 492 L2367.5 492.4 Z" fill="#50694c"/><path d="M2374 485.8 L2392.8 478.4 L2392 480.4 L2373 487.8 Z" fill="#4a5a47"/><path d="M2367.7 489.6 L2392.3 479.3 L2383.4 491 L2368.8 491.4 Z" fill="#4a88e6"/></svg>
<svg class="r" style="left:2410px;top:939.05px;filter:blur(0.4px)" width="34" height="36" viewBox="2410 467 34 36"><defs><linearGradient id="g9" gradientUnits="userSpaceOnUse" x1="2417" y1="497" x2="2437" y2="481"><stop offset="0" stop-color="#c8508a"/><stop offset="0.45" stop-color="#b070b0"/><stop offset="1" stop-color="#74b0e2"/></linearGradient></defs><g fill="#a9c2c8" opacity="0.55"><rect x="2416.6" y="473.2" width="1.9" height="1.9" /><rect x="2419.6" y="473.2" width="1.9" height="1.9" /><rect x="2422.6" y="473.2" width="1.9" height="1.9" /><rect x="2425.6" y="473.2" width="1.9" height="1.9" /><rect x="2428.6" y="473.2" width="1.9" height="1.9" /><rect x="2419.6" y="476.2" width="1.9" height="1.9" /><rect x="2422.6" y="476.2" width="1.9" height="1.9" /><rect x="2425.6" y="476.2" width="1.9" height="1.9" /><rect x="2428.6" y="476.2" width="1.9" height="1.9" /><rect x="2422.6" y="479.2" width="1.9" height="1.9" /><rect x="2425.6" y="479.2" width="1.9" height="1.9" /><rect x="2428.6" y="479.2" width="1.9" height="1.9" /><rect x="2431.6" y="479.2" width="1.9" height="1.9" /><rect x="2425.6" y="482.2" width="1.9" height="1.9" /><rect x="2428.6" y="482.2" width="1.9" height="1.9" /><rect x="2431.6" y="482.2" width="1.9" height="1.9" /></g><path d="M2416.1 497.3 L2429.8 485.2 L2432.6 479.6 L2437.6 485.2 Q2438.3 486.2 2437.6 487.2 L2428.4 498 L2416.8 498.3 Z" fill="url(#g9)"/></svg>
<svg class="r" style="left:2455px;top:939.75px" width="36" height="36" viewBox="2455 467.7 36 36"><circle cx="2473.1" cy="485.8" r="14.4" fill="#e3e4ea"/><rect x="2471.9" y="484.5" width="2.9" height="8.3" fill="#3b3b3d"/><rect x="2471.9" y="478.4" width="2.9" height="2.4" fill="#3b3b3d"/></svg>
<svg class="r" style="left:2501.75px;top:940.27px;" width="35.50" height="35.50" viewBox="0 0 24 24"><path d="M6 19c0 1.1.9 2 2 2h8c1.1 0 2-.9 2-2V7H6zM19 4h-3.5l-1-1h-5l-1 1H5v2h14z" fill="#e2e3e8"/></svg>
<div class="r" style="left:0.00px;top:983.20px;width:2560.00px;height:2.00px;background:#85997f;"></div>
<div id="r10std" class="t" style="left:22.64px;top:1000.28px;font-size:20.50px;color:#dfe9d9;letter-spacing:-0.028px;font-weight:400;">Feb 03 - 19:15</div>
<div id="r10pos" class="t" style="left:243.10px;top:999.58px;font-size:20.50px;color:#dfe9d9;letter-spacing:0.288px;font-weight:400;">LANDED</div>
<div id="r10dep" class="t" style="left:823.14px;top:999.58px;font-size:20.50px;color:#dfe9d9;letter-spacing:0.000px;font-weight:400;">EDDB</div>
<div id="r10arr" class="t" style="left:1048.12px;top:999.58px;font-size:20.50px;color:#dfe9d9;letter-spacing:0.000px;font-weight:400;">LIPZ</div>
<div class="r" style="left:415px;top:1001.20px;width:75px;height:18px;background:#3f573c;opacity:0.16;filter:blur(4px);border-radius:6px"></div>
<div class="r" style="left:625px;top:1001.20px;width:85px;height:18px;background:#3f573c;opacity:0.16;filter:blur(4px);border-radius:6px"></div>
<svg class="r" style="left:1358.32px;top:992.90px;" width="34.60" height="34.60" viewBox="0 0 24 24"><path d="M7 10l5 5 5-5z" fill="#e4ecdf"/></svg>
<svg class="r" style="left:1849.47px;top:993.98px;" width="33.00" height="33.00" viewBox="0 0 24 24"><path d="M3 17.25V21h3.75L17.81 9.94l-3.75-3.75zM20.71 7.04c.39-.39.39-1.02 0-1.41l-2.34-2.34a.996.996 0 0 0-1.41 0l-1.83 1.83 3.75 3.75z" fill="#e2e3e8"/></svg>
<div id="r10st" class="t" style="left:1929.62px;top:998.96px;font-size:23.50px;color:#dfe9d9;letter-spacing:0.324px;font-weight:400;">CLOSED</div>
<svg class="r" style="left:2055.92px;top:993.40px;" width="34.60" height="34.60" viewBox="0 0 24 24"><path d="M7 10l5 5 5-5z" fill="#e4ecdf"/></svg>
<svg class="r" style="left:2362px;top:991.50px;filter:blur(0.5px)" width="38" height="38" viewBox="2362 467 38 38"><circle cx="2380.8" cy="485.7" r="10.6" stroke="#7c8c72" stroke-width="4.4" fill="none"/><path d="M2366.5 489.2 L2393.5 478.2 L2384 492 L2367.5 492.4 Z" fill="#50694c"/><path d="M2374 485.8 L2392.8 478.4 L2392 480.4 L2373 487.8 Z" fill="#4a5a47"/><path d="M2367.7 489.6 L2392.3 479.3 L2383.4 491 L2368.8 491.4 Z" fill="#4a88e6"/></svg>
<svg class="r" style="left:2410px;top:991.50px;filter:blur(0.4px)" width="34" height="36" viewBox="2410 467 34 36"><defs><linearGradient id="g10" gradientUnits="userSpaceOnUse" x1="2417" y1="497" x2="2437" y2="481"><stop offset="0" stop-color="#c8508a"/><stop offset="0.45" stop-color="#b070b0"/><stop offset="1" stop-color="#74b0e2"/></linearGradient></defs><g fill="#a9c2c8" opacity="0.55"><rect x="2416.6" y="473.2" width="1.9" height="1.9" /><rect x="2419.6" y="473.2" width="1.9" height="1.9" /><rect x="2422.6" y="473.2" width="1.9" height="1.9" /><rect x="2425.6" y="473.2" width="1.9" height="1.9" /><rect x="2428.6" y="473.2" width="1.9" height="1.9" /><rect x="2419.6" y="476.2" width="1.9" height="1.9" /><rect x="2422.6" y="476.2" width="1.9" height="1.9" /><rect x="2425.6" y="476.2" width="1.9" height="1.9" /><rect x="2428.6" y="476.2" width="1.9" height="1.9" /><rect x="2422.6" y="479.2" width="1.9" height="1.9" /><rect x="2425.6" y="479.2" width="1.9" height="1.9" /><rect x="2428.6" y="479.2" width="1.9" height="1.9" /><rect x="2431.6" y="479.2" width="1.9" height="1.9" /><rect x="2425.6" y="482.2" width="1.9" height="1.9" /><rect x="2428.6" y="482.2" width="1.9" height="1.9" /><rect x="2431.6" y="482.2" width="1.9" height="1.9" /></g><path d="M2416.1 497.3 L2429.8 485.2 L2432.6 479.6 L2437.6 485.2 Q2438.3 486.2 2437.6 487.2 L2428.4 498 L2416.8 498.3 Z" fill="url(#g10)"/></svg>
<svg class="r" style="left:2455px;top:992.20px" width="36" height="36" viewBox="2455 467.7 36 36"><circle cx="2473.1" cy="485.8" r="14.4" fill="#e3e4ea"/><rect x="2471.9" y="484.5" width="2.9" height="8.3" fill="#3b3b3d"/><rect x="2471.9" y="478.4" width="2.9" height="2.4" fill="#3b3b3d"/></svg>
<svg class="r" style="left:2501.75px;top:992.72px;" width="35.50" height="35.50" viewBox="0 0 24 24"><path d="M6 19c0 1.1.9 2 2 2h8c1.1 0 2-.9 2-2V7H6zM19 4h-3.5l-1-1h-5l-1 1H5v2h14z" fill="#e2e3e8"/></svg>
<div class="r" style="left:0.00px;top:1035.65px;width:2560.00px;height:2.00px;background:#85997f;"></div>
<div id="r11std" class="t" style="left:22.64px;top:1052.61px;font-size:20.50px;color:#dfe9d9;letter-spacing:-0.097px;font-weight:400;">Feb 03 - 21:00</div>
<div id="r11pos" class="t" style="left:243.10px;top:1051.90px;font-size:20.50px;color:#dfe9d9;letter-spacing:0.000px;font-weight:400;">INFLIGHT</div>
<div id="r11dep" class="t" style="left:823.14px;top:1051.90px;font-size:20.50px;color:#dfe9d9;letter-spacing:0.000px;font-weight:400;">LIPZ</div>
<div id="r11arr" class="t" style="left:1048.12px;top:1051.90px;font-size:20.50px;color:#dfe9d9;letter-spacing:0.000px;font-weight:400;">EDDB</div>
<div class="r" style="left:415px;top:1053.65px;width:60px;height:18px;background:#3f573c;opacity:0.16;filter:blur(4px);border-radius:6px"></div>
<div class="r" style="left:625px;top:1053.65px;width:85px;height:18px;background:#3f573c;opacity:0.16;filter:blur(4px);border-radius:6px"></div>
<svg class="r" style="left:1358.32px;top:1045.35px;" width="34.60" height="34.60" viewBox="0 0 24 24"><path d="M7 10l5 5 5-5z" fill="#e4ecdf"/></svg>
<svg class="r" style="left:1849.47px;top:1046.42px;" width="33.00" height="33.00" viewBox="0 0 24 24"><path d="M3 17.25V21h3.75L17.81 9.94l-3.75-3.75zM20.71 7.04c.39-.39.39-1.02 0-1.41l-2.34-2.34a.996.996 0 0 0-1.41 0l-1.83 1.83 3.75 3.75z" fill="#e2e3e8"/></svg>
<div id="r11st" class="t" style="left:1929.62px;top:1051.29px;font-size:23.50px;color:#dfe9d9;letter-spacing:0.324px;font-weight:400;">CLOSED</div>
<svg class="r" style="left:2055.92px;top:1047.29px;" width="34.60" height="34.60" viewBox="0 0 24 24"><path d="M7 14l5-5 5 5z" fill="#e4ecdf"/></svg>
<svg class="r" style="left:2362px;top:1043.95px;filter:blur(0.5px)" width="38" height="38" viewBox="2362 467 38 38"><circle cx="2380.8" cy="485.7" r="10.6" stroke="#7c8c72" stroke-width="4.4" fill="none"/><path d="M2366.5 489.2 L2393.5 478.2 L2384 492 L2367.5 492.4 Z" fill="#50694c"/><path d="M2374 485.8 L2392.8 478.4 L2392 480.4 L2373 487.8 Z" fill="#4a5a47"/><path d="M2367.7 489.6 L2392.3 479.3 L2383.4 491 L2368.8 491.4 Z" fill="#4a88e6"/></svg>
<svg class="r" style="left:2410px;top:1043.95px;filter:blur(0.4px)" width="34" height="36" viewBox="2410 467 34 36"><defs><linearGradient id="g11" gradientUnits="userSpaceOnUse" x1="2417" y1="497" x2="2437" y2="481"><stop offset="0" stop-color="#c8508a"/><stop offset="0.45" stop-color="#b070b0"/><stop offset="1" stop-color="#74b0e2"/></linearGradient></defs><g fill="#a9c2c8" opacity="0.55"><rect x="2416.6" y="473.2" width="1.9" height="1.9" /><rect x="2419.6" y="473.2" width="1.9" height="1.9" /><rect x="2422.6" y="473.2" width="1.9" height="1.9" /><rect x="2425.6" y="473.2" width="1.9" height="1.9" /><rect x="2428.6" y="473.2" width="1.9" height="1.9" /><rect x="2419.6" y="476.2" width="1.9" height="1.9" /><rect x="2422.6" y="476.2" width="1.9" height="1.9" /><rect x="2425.6" y="476.2" width="1.9" height="1.9" /><rect x="2428.6" y="476.2" width="1.9" height="1.9" /><rect x="2422.6" y="479.2" width="1.9" height="1.9" /><rect x="2425.6" y="479.2" width="1.9" height="1.9" /><rect x="2428.6" y="479.2" width="1.9" height="1.9" /><rect x="2431.6" y="479.2" width="1.9" height="1.9" /><rect x="2425.6" y="482.2" width="1.9" height="1.9" /><rect x="2428.6" y="482.2" width="1.9" height="1.9" /><rect x="2431.6" y="482.2" width="1.9" height="1.9" /></g><path d="M2416.1 497.3 L2429.8 485.2 L2432.6 479.6 L2437.6 485.2 Q2438.3 486.2 2437.6 487.2 L2428.4 498 L2416.8 498.3 Z" fill="url(#g11)"/></svg>
<svg class="r" style="left:2455px;top:1044.65px" width="36" height="36" viewBox="2455 467.7 36 36"><circle cx="2473.1" cy="485.8" r="14.4" fill="#e3e4ea"/><rect x="2471.9" y="484.5" width="2.9" height="8.3" fill="#3b3b3d"/><rect x="2471.9" y="478.4" width="2.9" height="2.4" fill="#3b3b3d"/></svg>
<svg class="r" style="left:2501.75px;top:1045.17px;" width="35.50" height="35.50" viewBox="0 0 24 24"><path d="M6 19c0 1.1.9 2 2 2h8c1.1 0 2-.9 2-2V7H6zM19 4h-3.5l-1-1h-5l-1 1H5v2h14z" fill="#e2e3e8"/></svg>
<div class="r" style="left:1930.30px;top:1080.30px;width:149.70px;height:396.20px;background:#2a2b30;border-radius:0 0 7px 7px;box-shadow:0 4px 8px rgba(0,0,0,0.45)"></div>
<div class="r" style="left:1930.30px;top:1230.10px;width:149.70px;height:69.40px;background:#484e60;"></div>
<div id="mdraft" class="t" style="left:1954.10px;top:1117.15px;font-size:23.00px;color:#e6e6e9;letter-spacing:0.090px;font-weight:400;">DRAFT</div>
<div id="min" class="t" style="left:1953.20px;top:1171.29px;font-size:23.00px;color:#e6e6e9;letter-spacing:0.000px;font-weight:400;">IN</div>
<div id="mproc" class="t" style="left:1954.10px;top:1199.39px;font-size:23.00px;color:#e6e6e9;letter-spacing:0.240px;font-weight:400;">PROCESS</div>
<div id="mclosed" class="t" style="left:1954.10px;top:1254.95px;font-size:23.00px;color:#dfe3f5;letter-spacing:0.000px;font-weight:400;">CLOSED</div>
<div id="mref" class="t" style="left:1954.10px;top:1324.43px;font-size:23.00px;color:#e6e6e9;letter-spacing:0.285px;font-weight:400;">REFRESH</div>
<div id="matc" class="t" style="left:1955.00px;top:1378.51px;font-size:23.00px;color:#e6e6e9;letter-spacing:0.000px;font-weight:400;">ATC</div>
<div id="mpend" class="t" style="left:1954.10px;top:1408.17px;font-size:23.00px;color:#e6e6e9;letter-spacing:0.330px;font-weight:400;">PENDING</div>
<div id="mlate" class="t" style="left:1954.10px;top:1447.51px;font-size:23.00px;color:#e6e6e9;letter-spacing:0.000px;font-weight:400;">LATE</div>
<div class="r" style="left:1930.3px;top:1230px;width:149.7px;height:70px;overflow:hidden"><svg style="position:absolute;left:139px;top:17.5px" width="32" height="32" viewBox="0 0 24 24"><path d="M9 16.17 4.83 12l-1.42 1.41L9 19 21 7l-1.41-1.41z" fill="#dfe3f5"/></svg></div>
</body></html>
